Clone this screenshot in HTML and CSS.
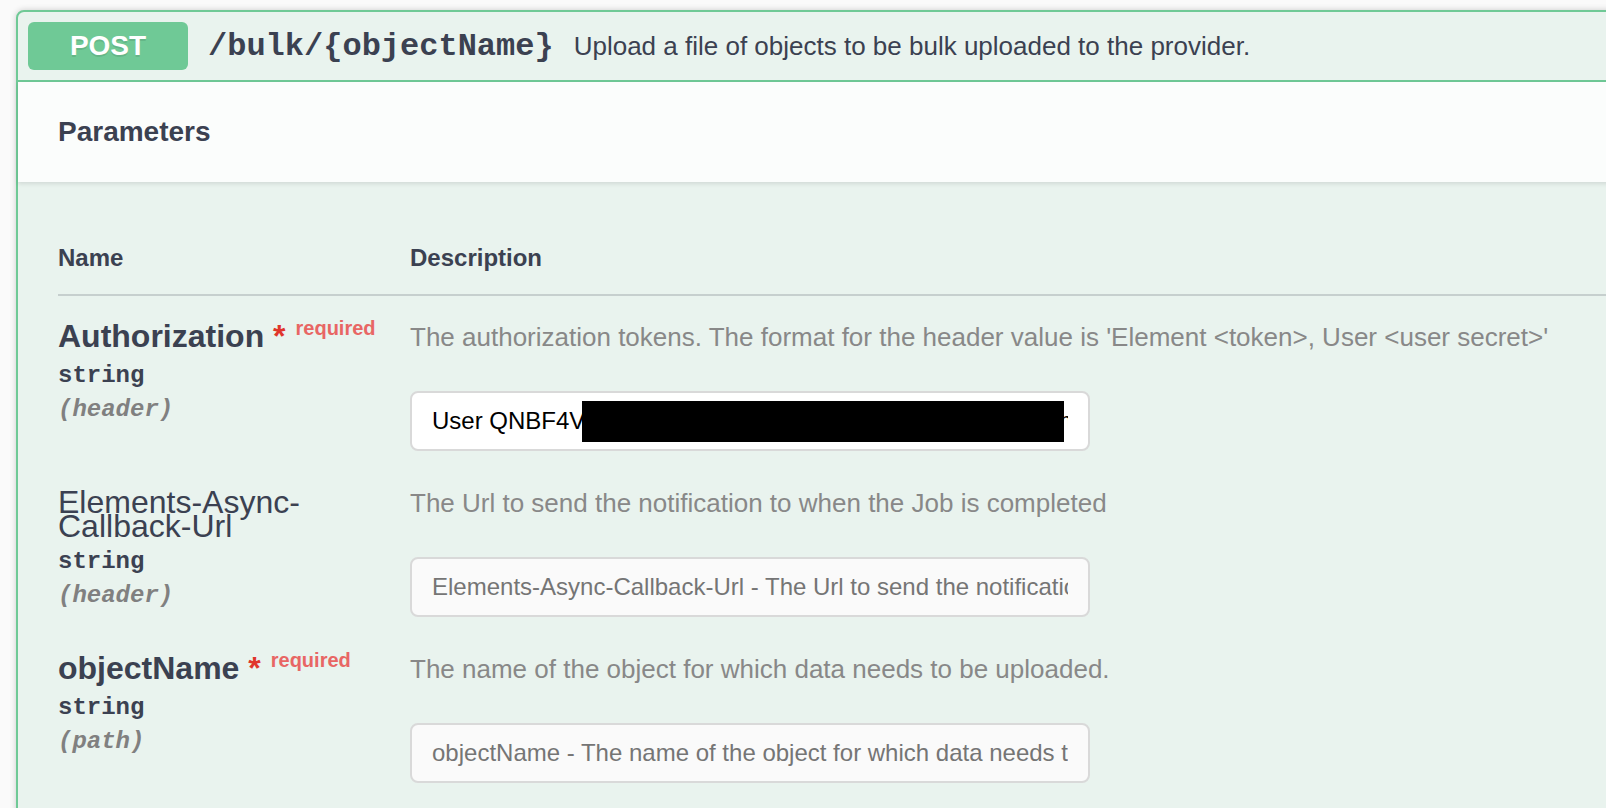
FILE: index.html
```html
<!DOCTYPE html>
<html>
<head>
<meta charset="utf-8">
<title>POST /bulk/{objectName}</title>
<link rel="stylesheet" href="styles.css">
</head>
<body>
<div class="page">
  <div class="opblock">
    <div class="summary">
      <span class="method">POST</span>
      <span class="path">/bulk/{objectName}</span>
      <span class="summary-desc">Upload a file of objects to be bulk uploaded to the provider.</span>
    </div>
    <div class="section-header">
      <h4>Parameters</h4>
    </div>
    <div class="params">
      <div class="thead">
        <div>Name</div>
        <div>Description</div>
      </div>
      <div class="row">
        <div class="col-name">
          <div class="pname required">Authorization<span class="star">&nbsp;*</span><span class="req">required</span></div>
          <div class="ptype">string</div>
          <div class="pin">(header)</div>
        </div>
        <div class="col-desc">
          <p>The authorization tokens. The format for the header value is 'Element &lt;token&gt;, User &lt;user secret&gt;'</p>
          <div class="field">
            <input class="filled" type="text" value="User QNBF4VxxxxxxxxxxxxxxxxxxxxxxxxxxxxxxxxxA=, Element abc">
            <span class="redact"></span>
          </div>
        </div>
      </div>
      <div class="row">
        <div class="col-name">
          <div class="pname">Elements-Async-Callback-Url</div>
          <div class="ptype">string</div>
          <div class="pin">(header)</div>
        </div>
        <div class="col-desc">
          <p>The Url to send the notification to when the Job is completed</p>
          <div class="field">
            <input type="text" placeholder="Elements-Async-Callback-Url - The Url to send the notification to when the Job is completed">
          </div>
        </div>
      </div>
      <div class="row">
        <div class="col-name">
          <div class="pname required">objectName<span class="star">&nbsp;*</span><span class="req">required</span></div>
          <div class="ptype">string</div>
          <div class="pin">(path)</div>
        </div>
        <div class="col-desc">
          <p>The name of the object for which data needs to be uploaded.</p>
          <div class="field">
            <input type="text" placeholder="objectName - The name of the object for which data needs to be uploaded.">
          </div>
        </div>
      </div>
    </div>
  </div>
</div>
</body>
</html>
```

FILE: styles.css
```css
html, body {
  margin: 0;
  padding: 0;
}

body {
  background: #fafafa;
  overflow: hidden;
  font-family: "Liberation Sans", Arial, Helvetica, sans-serif;
  color: #3b4151;
}

.page {
  padding: 10px 0 0 16px;
}

.opblock {
  width: 1760px;
  min-height: 900px;
  border: 2px solid #6fc996;
  border-radius: 8px;
  background: #e9f3ee;
  box-shadow: 0 0 6px rgba(0, 0, 0, 0.19);
}

.summary {
  display: flex;
  align-items: center;
  padding: 10px;
  border-bottom: 2px solid #6fc996;
}

.method {
  width: 160px;
  height: 48px;
  display: flex;
  align-items: center;
  justify-content: center;
  background: #6fc996;
  color: #fff;
  font-size: 28px;
  font-weight: 700;
  border-radius: 6px;
  text-shadow: 0 2px 0 rgba(0, 0, 0, 0.1);
}

.path {
  font-family: "Liberation Mono", "Courier New", monospace;
  font-weight: 700;
  font-size: 32px;
  padding: 0 20px;
  color: #3b4151;
}

.summary-desc {
  font-size: 26px;
  color: #3b4151;
}

.section-header {
  height: 100px;
  display: flex;
  align-items: center;
  padding: 0 40px;
  background: rgba(255, 255, 255, 0.8);
  box-shadow: 0 2px 4px rgba(0, 0, 0, 0.1);
}

.section-header h4 {
  margin: 0;
  font-size: 28px;
  font-weight: 700;
  color: #3b4151;
}

.params {
  padding: 40px;
}

.thead {
  display: grid;
  grid-template-columns: 352px 1fr;
  padding: 22px 0;
  font-size: 24px;
  line-height: 28px;
  font-weight: 700;
  border-bottom: 2px solid rgba(59, 65, 81, 0.2);
}

.row {
  display: grid;
  grid-template-columns: 352px 1fr;
  padding-top: 20px;
}

.pname {
  margin-top: 8px;
  font-size: 32px;
  line-height: 24px;
  font-weight: 400;
  color: #3b4151;
}

.pname.required {
  font-weight: 700;
}

.star {
  color: #e0352b;
}

.req {
  position: relative;
  top: -12px;
  padding: 0 10px;
  font-size: 20px;
  color: #e86664;
}

.ptype {
  margin-top: 12px;
  font-family: "Liberation Mono", "Courier New", monospace;
  font-weight: 700;
  font-size: 24px;
  line-height: 24px;
  color: #3b4151;
}

.pin {
  margin-top: 10px;
  font-family: "Liberation Mono", "Courier New", monospace;
  font-weight: 700;
  font-style: italic;
  font-size: 24px;
  line-height: 24px;
  color: #808080;
}

.col-desc p {
  margin: 0;
  padding-top: 1px;
  font-size: 26px;
  line-height: 40px;
  color: #888888;
}

.field {
  position: relative;
  width: 680px;
  margin-top: 34px;
  margin-bottom: 11px;
}

.field input {
  display: block;
  box-sizing: border-box;
  width: 680px;
  height: 60px;
  margin: 0;
  padding: 0 20px;
  border: 2px solid #d9d9d9;
  border-radius: 8px;
  background: #fafafa;
  font-family: "Liberation Sans", Arial, sans-serif;
  font-size: 24px;
  color: #000;
  outline: none;
}

.field input.filled {
  background: #fff;
}

.field input::placeholder {
  color: #757575;
  opacity: 1;
}

.redact {
  position: absolute;
  left: 172px;
  top: 10px;
  width: 482px;
  height: 41px;
  background: #000;
}
```
